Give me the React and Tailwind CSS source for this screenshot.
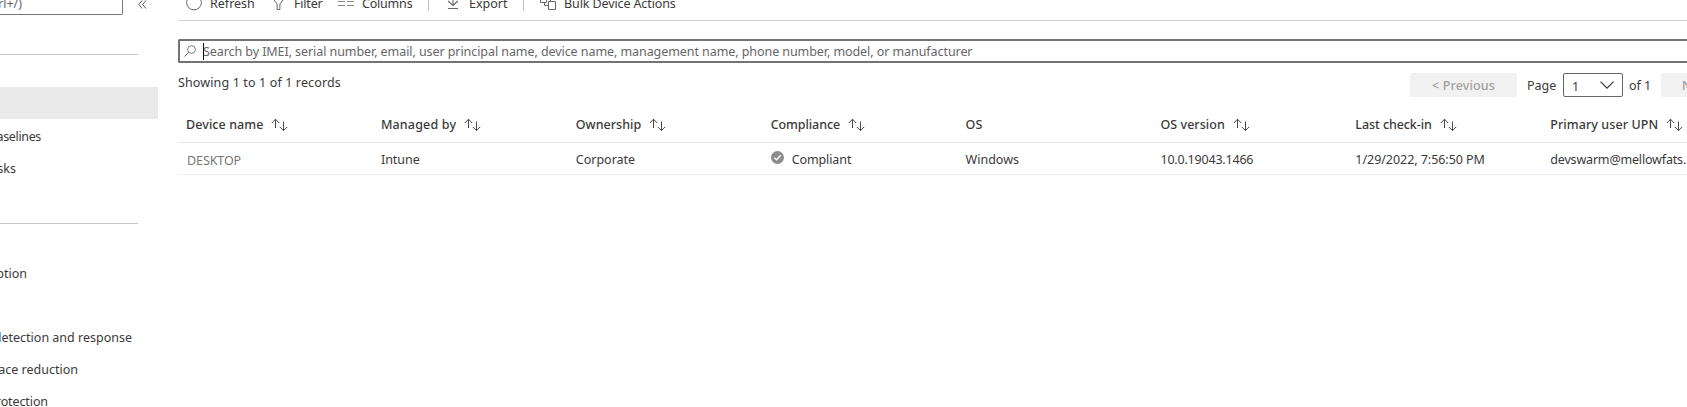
function SortArrows() {
  return (
    <svg className="h-[14px] w-[17px] shrink-0" viewBox="0 0 17 14" fill="none" stroke="#4a4846" strokeWidth="1">
      <path d="M4.5 1.2V10M0.8 5L4.5 1.2L8.2 5M12.5 3.5V12.6M8.8 8.9L12.5 12.6L16.2 8.9" />
    </svg>
  );
}

const columns = [
  { title: "Device name", sort: true, track: "tracking-[0.08px]" },
  { title: "Managed by", sort: true, track: "tracking-[0.17px]" },
  { title: "Ownership", sort: true, track: "tracking-[0.02px]" },
  { title: "Compliance", sort: true, track: "tracking-[-0.08px]" },
  { title: "OS", sort: false, track: "tracking-[0.2px]" },
  { title: "OS version", sort: true, track: "tracking-[0.04px]" },
  { title: "Last check-in", sort: true, track: "tracking-[-0.08px]" },
  { title: "Primary user UPN", sort: true, track: "tracking-[0.09px]" },
];

function NavItem({ children, className = "" }) {
  return (
    <div className="flex h-8 shrink-0 items-center pt-1">
      <div className={`flex justify-end overflow-hidden whitespace-nowrap ${className}`}>
        <span>{children}</span>
      </div>
    </div>
  );
}

function Sidebar() {
  return (
    <nav className="flex w-[158px] shrink-0 flex-col">
      <div className="flex h-[15px] shrink-0 items-end">
        <div className="flex h-[24px] w-[123px] shrink-0 items-center rounded-br-[2px] border-r border-b border-[#777] text-[#666]">
          <span className="-ml-[2px] pt-[2px]">rl+/)</span>
        </div>
        <svg className="mb-[6px] ml-[15px] h-[9px] w-[9px]" viewBox="0 0 9 9" fill="none" stroke="#555" strokeWidth="1">
          <path d="M4.2 0.5L0.7 4.5L4.2 8.5M8 0.5L4.5 4.5L8 8.5" />
        </svg>
      </div>
      <div className="mt-[39px] h-px w-[138px] shrink-0 bg-[#c8c6c4]" />
      <div className="mt-8 h-8 shrink-0 bg-[#eaeaea]" />
      <NavItem className="w-[41px] tracking-[-0.35px]">aselines</NavItem>
      <NavItem className="w-[16px]">sks</NavItem>
      <div className="mt-10 h-px w-[138px] shrink-0 bg-[#c8c6c4]" />
      <div className="h-8 shrink-0" />
      <NavItem className="w-[27px]">ption</NavItem>
      <div className="h-8 shrink-0" />
      <NavItem className="w-[132px]">detection and response</NavItem>
      <NavItem className="w-[78px]">ace reduction</NavItem>
      <NavItem className="w-[48px] tracking-[-0.1px]">rotection</NavItem>
    </nav>
  );
}

function Toolbar() {
  return (
    <div className="flex h-5 shrink-0 items-start">
      <div className="-mt-[6px] flex h-5 items-center whitespace-nowrap">
        <svg className="-mt-[2px] ml-2 h-4 w-4" viewBox="0 0 16 16" fill="none" stroke="#666">
          <circle cx="8" cy="7.5" r="7.4" />
        </svg>
        <span className="ml-2 w-[62px]">Refresh</span>
        <svg className="-mt-px ml-[1px] h-3 w-[11px]" viewBox="0 0 11 12" fill="none" stroke="#666">
          <path d="M0.6 0.5H10.4V1.5L6.9 6V11.5H4.1V6L0.6 1.5Z" />
        </svg>
        <span className="ml-[10px] w-[44px] tracking-[-0.2px]">Filter</span>
        <svg className="h-[10px] w-4" viewBox="0 0 16 10" fill="none" stroke="#888">
          <path d="M0 2.5H7M9 2.5H16M0 6.5H7M9 6.5H16" />
        </svg>
        <span className="ml-2 w-[66px] tracking-[-0.2px]">Columns</span>
        <i className="-mt-[3px] h-4 w-px bg-[#c8c6c4]" />
        <svg className="-mt-[2px] ml-[18px] h-[14px] w-3" viewBox="0 0 12 14" fill="none" stroke="#666" strokeWidth="1.1">
          <path d="M6 0V9M1.2 5L6 9.5L10.8 5M1 12.5H11" />
        </svg>
        <span className="ml-[10px] w-[54px]">Export</span>
        <i className="-mt-[3px] h-4 w-px bg-[#c8c6c4]" />
        <svg className="-mt-[2px] ml-4 h-4 w-4" viewBox="0 0 16 16" fill="none" stroke="#666">
          <path d="M0.5 1.5H6.5V7.5H0.5ZM4.5 7.5V10.5H8M8.5 6.5H15.5V14.5H8.5ZM10.5 6V2.5H6.5" />
        </svg>
        <span className="ml-2 tracking-[-0.11px]">Bulk Device Actions</span>
      </div>
    </div>
  );
}

function Pager() {
  return (
    <div className="flex h-6 items-center whitespace-nowrap">
      <div className="flex h-6 w-[107px] items-center justify-center rounded-[2px] bg-[#f1f1f1] pt-[2px] font-medium tracking-[0.15px] text-[#a19f9d]">
        &lt; Previous
      </div>
      <span className="ml-[10px] w-9 pt-[2px]">Page</span>
      <div className="flex h-6 w-[60px] items-center justify-between rounded-[2px] border border-[#666] pr-2 pl-2">
        <span className="pt-[3px]">1</span>
        <svg className="h-2 w-[14px]" viewBox="0 0 14 8" fill="none" stroke="#323130" strokeWidth="1.1">
          <path d="M0.5 0.7L7 7.2L13.5 0.7" />
        </svg>
      </div>
      <span className="ml-[6px] w-8 pt-[2px]">of 1</span>
      <div className="flex h-6 w-[26px] items-center overflow-hidden rounded-l-[2px] bg-[#f1f1f1] pt-[2px] pl-[21px] font-medium text-[#a19f9d]">
        N
      </div>
    </div>
  );
}

function DeviceTable() {
  return (
    <div className="mt-[10px] w-[1567px]">
      <div className="grid h-[36px] grid-cols-[repeat(8,194.9px)] items-center border-b border-[#e6e6e6] pl-2 font-medium whitespace-nowrap">
        {columns.map((c) => (
          <div key={c.title} className="flex items-center gap-2">
            <span className={c.track}>{c.title}</span>
            {c.sort && <SortArrows />}
          </div>
        ))}
      </div>
      <div className="grid h-8 grid-cols-[repeat(8,194.9px)] items-center border-b border-[#f0efee] pt-[2px] pl-2 whitespace-nowrap">
        <span className="pt-[2px] pl-px tracking-[-0.1px] text-[#777]">DESKTOP</span>
        <span>Intune</span>
        <span>Corporate</span>
        <div className="flex items-center gap-2">
          <svg className="-mt-[5px] h-[13px] w-[13px]" viewBox="0 0 13 13">
            <circle cx="6.5" cy="6.5" r="6.5" fill="#8c8c8c" />
            <path d="M3.4 6.7L5.6 8.8L9.7 4.3" fill="none" stroke="#fff" strokeWidth="1.5" />
          </svg>
          <span className="tracking-[-0.1px]">Compliant</span>
        </div>
        <span>Windows</span>
        <span className="tracking-[-0.2px]">10.0.19043.1466</span>
        <span className="tracking-[-0.05px]">1/29/2022, 7:56:50 PM</span>
        <span className="tracking-[-0.17px]">devswarm@mellowfats.</span>
      </div>
    </div>
  );
}

export default function App() {
  return (
    <div className="flex h-[407px] w-full overflow-hidden bg-white font-['Noto_Sans',sans-serif] text-[12.5px] leading-[18px] text-[#3b3a39]">
      <Sidebar />
      <main className="ml-5 flex min-w-0 flex-1 flex-col overflow-hidden">
        <Toolbar />
        <div className="h-px shrink-0 bg-[#d2d0ce]" />
        <div className="mt-[18px] flex h-6 shrink-0 items-center rounded-l-[2px] border-2 border-r-0 border-[#737373] pl-1 whitespace-nowrap text-[#666]">
          <svg className="h-3 w-3" viewBox="0 0 12 12" fill="none" stroke="#777">
            <circle cx="7.5" cy="4.5" r="3.9" />
            <path d="M4.8 7.3L0.4 11.6" />
          </svg>
          <i className="ml-[7px] h-[17px] w-px bg-black" />
          <span className="-ml-px pt-[2px] tracking-[-0.07px]">
            Search by IMEI, serial number, email, user principal name, device name, management name, phone number, model, or manufacturer
          </span>
        </div>
        <div className="mt-[10px] flex shrink-0 items-start justify-between">
          <span className="pt-px tracking-[0.13px]">Showing 1 to 1 of 1 records</span>
          <Pager />
        </div>
        <DeviceTable />
      </main>
    </div>
  );
}
